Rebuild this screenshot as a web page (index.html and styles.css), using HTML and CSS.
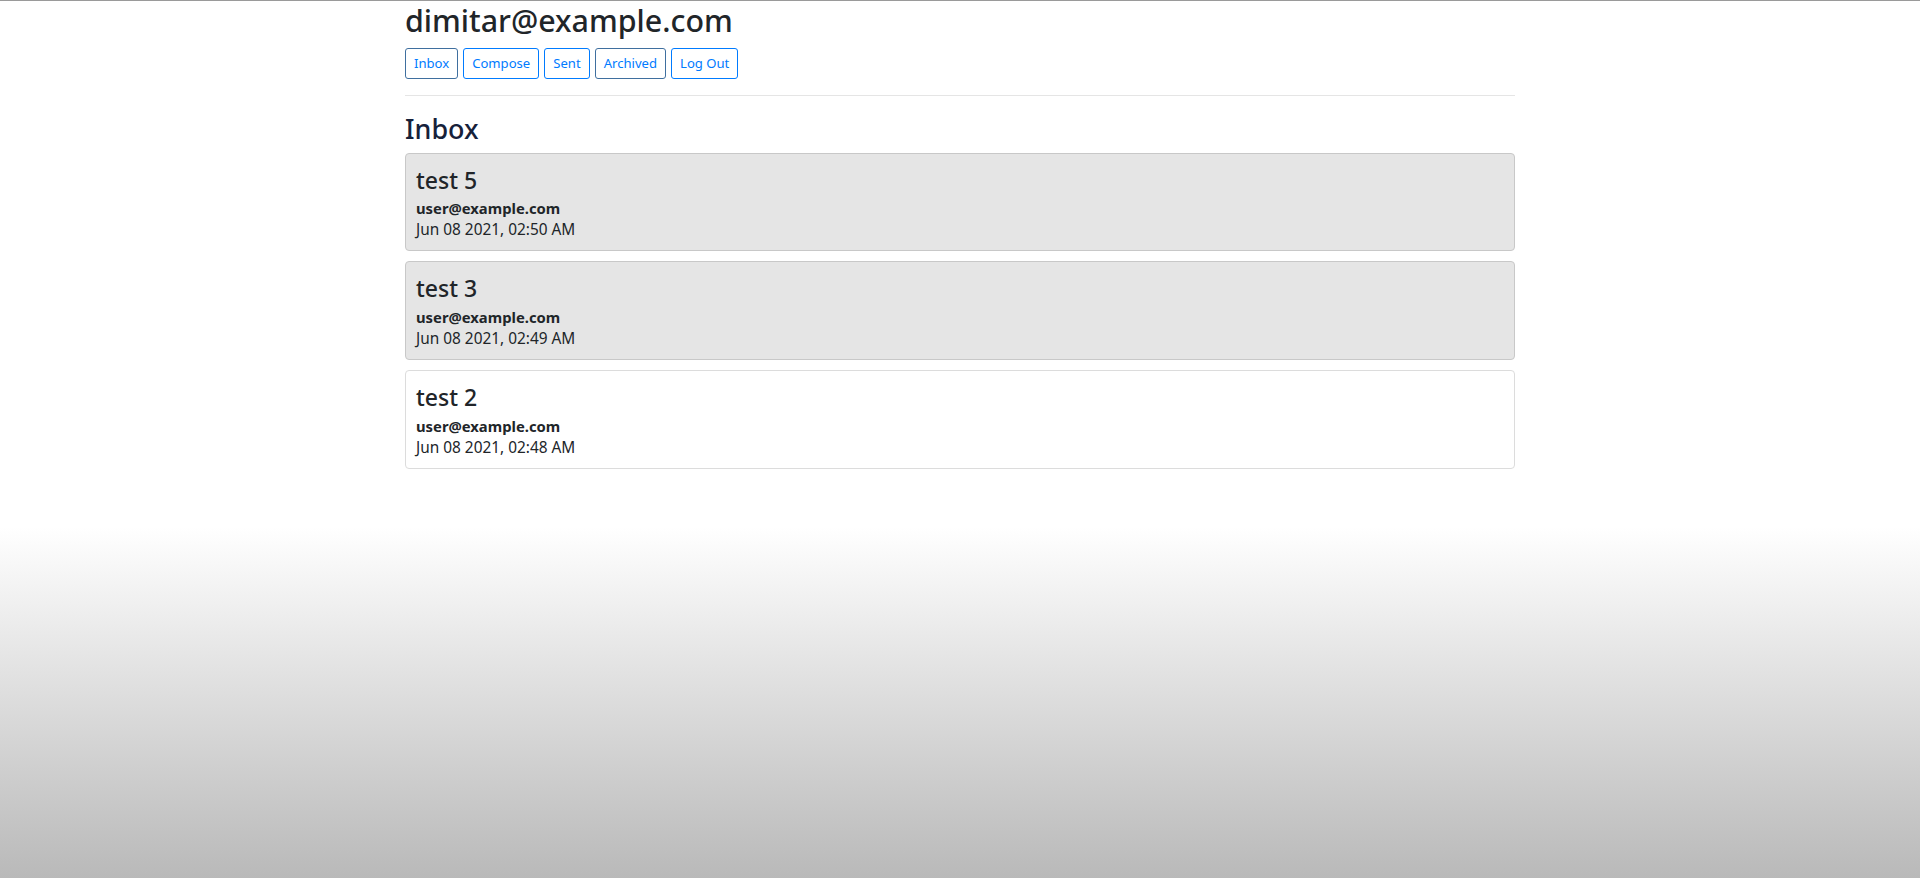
FILE: index.html
```html
<!DOCTYPE html>
<html lang="en">
<head>
<meta charset="utf-8">
<title>Mail</title>
<link rel="stylesheet" href="styles.css">
</head>
<body>
<div class="container">
  <h2 class="user">dimitar@example.com</h2>
  <nav class="nav">
    <button class="btn btn-muted">Inbox</button>
    <button class="btn">Compose</button>
    <button class="btn">Sent</button>
    <button class="btn btn-muted">Archived</button>
    <button class="btn">Log Out</button>
  </nav>
  <hr class="rule">
  <h3 class="section-title">Inbox</h3>
  <div class="mail-list">
    <div class="mail read">
      <h4 class="mail-subject">test 5</h4>
      <div class="mail-sender">user@example.com</div>
      <div class="mail-date">Jun 08 2021, 02:50 AM</div>
    </div>
    <div class="mail read">
      <h4 class="mail-subject">test 3</h4>
      <div class="mail-sender">user@example.com</div>
      <div class="mail-date">Jun 08 2021, 02:49 AM</div>
    </div>
    <div class="mail">
      <h4 class="mail-subject">test 2</h4>
      <div class="mail-sender">user@example.com</div>
      <div class="mail-date">Jun 08 2021, 02:48 AM</div>
    </div>
  </div>
</div>
</body>
</html>
```
FILE: styles.css
```css
* { box-sizing: border-box; }

html, body {
  margin: 0;
  padding: 0;
}

body {
  min-height: 100vh;
  border-top: 1px solid #9a9a9a;
  background: linear-gradient(to bottom, #ffffff 0%, #ffffff 60%, #b9b9b9 100%);
  font-family: "Noto Sans", "Open Sans", sans-serif;
  color: #212529;
  font-size: 15.4px;
}

.container {
  width: 1140px;
  margin: 0 auto;
  padding: 1px 15px 0;
}

.user {
  margin: 0 0 8px;
  font-size: 30.4px;
  font-weight: 500;
  line-height: 38px;
  color: #212529;
}

.nav {
  display: flex;
  gap: 5px;
}

.btn {
  font-family: inherit;
  font-size: 13.1px;
  line-height: 21px;
  padding: 4px 8px;
  border: 1px solid #007bff;
  border-radius: 3px;
  background: transparent;
  color: #007bff;
  cursor: pointer;
}

.btn-muted {
  border-color: #3f6f9f;
}

.rule {
  margin: 16px 0;
  border: 0;
  border-top: 1px solid rgba(0, 0, 0, 0.1);
}

.section-title {
  margin: 0 0 7px;
  font-size: 26.9px;
  font-weight: 500;
  line-height: 33.6px;
  color: #16213a;
}

.mail {
  border: 1px solid #dcdcdc;
  border-radius: 4px;
  padding: 12px 10px 9px;
  margin-bottom: 10px;
  background: #ffffff;
}

.mail.read {
  background: #e5e5e5;
  border-color: #c8c8c8;
}

.mail-subject {
  margin: 0 0 4px;
  font-size: 23px;
  font-weight: 500;
  line-height: 28.8px;
}

.mail-sender {
  font-size: 14.8px;
  font-weight: 700;
  line-height: 21px;
}

.mail-date {
  line-height: 22px;
}
```
